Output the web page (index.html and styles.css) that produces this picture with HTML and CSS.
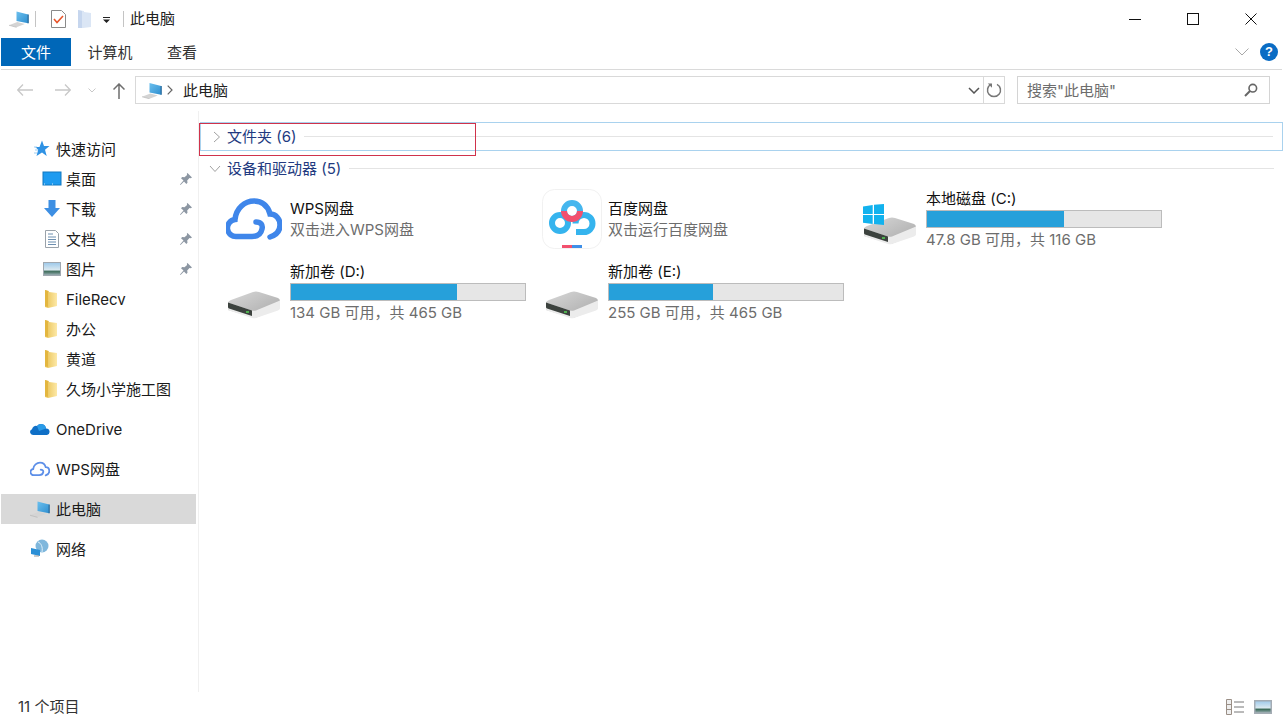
FILE: index.html
```html
<!DOCTYPE html>
<html lang="zh-CN">
<head>
<meta charset="utf-8">
<title>此电脑</title>
<link rel="stylesheet" href="styles.css">
</head>
<body>
<svg class="defs" width="0" height="0" aria-hidden="true">
  <defs>
    <linearGradient id="scr" x1="0" y1="0" x2="1" y2="1"><stop offset="0" stop-color="#6cc0ee"/><stop offset="1" stop-color="#2f8fd0"/></linearGradient>
    <linearGradient id="fold" x1="0" y1="0" x2="1" y2="0"><stop offset="0" stop-color="#e8c050"/><stop offset="1" stop-color="#fde9a8"/></linearGradient>
    <linearGradient id="top" x1="0" y1="0" x2="1" y2="1"><stop offset="0" stop-color="#d8d8d8"/><stop offset="1" stop-color="#a8a8a8"/></linearGradient>
    <linearGradient id="pic" x1="0" y1="0" x2="0" y2="1"><stop offset="0" stop-color="#9cc8ea"/><stop offset=".55" stop-color="#d8e8f0"/><stop offset=".7" stop-color="#3f6d5c"/><stop offset="1" stop-color="#a8b8c0"/></linearGradient>
    <symbol id="pc" viewBox="0 0 24 20">
      <path d="M0 17.500l10-4 9 2.500-10 4z" fill="#d4d4d4"/>
      <path d="M0 17.500l9 2.500" stroke="#b0b0b0" stroke-width=".7"/>
      <path d="M9 1l14 3.500V15L9 12.500z" fill="url(#scr)"/>
      <path d="M23 4.500V15" stroke="#2a6b9c" stroke-width="1.500"/>
    </symbol>
    <symbol id="folder" viewBox="0 0 14 20">
      <path d="M1 1l4 1v1l8 1v13l-9 2-3-1z" fill="url(#fold)"/>
      <path d="M1 1l3 1v16l-3-1z" fill="#e3b63f"/>
    </symbol>
    <symbol id="pin" viewBox="0 0 14 14">
      <path d="M8.500 1l4.500 4.500-1.300.7-1.200-.3-2.300 2.600.3 2.300-1.200 1.200-2.300-2.500L1.500 13 1 12.500l3.500-4-2.500-2.300 1.200-1.200 2.300.3L8.100 3l-.3-1.200z" fill="#8d97a3"/>
    </symbol>
    <symbol id="drive" viewBox="0 0 54 28">
      <path d="M1 12Q1 10 4 9L26 1q3-1 6 0l19 6q2 1 2 3v7L28 27 1 19z" fill="url(#top)"/>
      <path d="M1 11.500l24 8q2 .7 4 0L53 9.500V17q0 1.500-2 2.500L29 27q-2 .7-4 0L2 19.500q-1-.5-1-2z" fill="#ececec"/>
      <path d="M1 11.500l24 8v5.500L2 17.500q-1-.4-1-1.500z" fill="#3c423e"/>
      <rect x="19" y="20" width="3" height="2" fill="#4fb04f"/>
    </symbol>
  </defs>
</svg>
<div class="window">
  <header class="titlebar">
    <div class="qat">
      <svg class="ic-pc-title"><use href="#pc"/></svg>
      <span class="vsep"></span>
      <svg class="ic-check" viewBox="0 0 15 18"><path d="M.5.500h10l4 4v13H.5z" fill="#fff" stroke="#8a8a8a"/><path d="M3 9l3 3.500 6-6.500" fill="none" stroke="#e8552b" stroke-width="1.600"/></svg>
      <svg class="ic-newfolder" viewBox="0 0 13 18"><path d="M0 0l6 1v1l7 1v14l-8 1H0z" fill="#dbe6f5"/><path d="M0 0l4 1v17H0z" fill="#c6d6ee"/></svg>
      <svg class="ic-qatdrop" viewBox="0 0 7 6"><path d="M0 0h7v1H0zM0 2.500h7L3.500 6z" fill="#222"/></svg>
      <span class="vsep"></span>
      <span class="wintitle">此电脑</span>
    </div>
    <div class="winctl">
      <span class="ctl"><svg viewBox="0 0 12 12" width="12" height="12"><path d="M0 6.500h12" stroke="#111"/></svg></span>
      <span class="ctl"><svg viewBox="0 0 12 12" width="12" height="12"><rect x=".5" y=".5" width="11" height="11" fill="none" stroke="#111"/></svg></span>
      <span class="ctl"><svg viewBox="0 0 12 12" width="12" height="12"><path d="M.5.500l11 11M11.500.500l-11 11" stroke="#111" fill="none"/></svg></span>
    </div>
  </header>

  <nav class="ribbon">
    <span class="tab tab-file">文件</span>
    <span class="tab tab-pc">计算机</span>
    <span class="tab tab-view">查看</span>
    <span class="ribbon-space"></span>
    <svg class="ic-collapse" viewBox="0 0 14 8"><path d="M.5.500L7 7 13.500.500" fill="none" stroke="#a8a8a8"/></svg>
    <span class="help">?</span>
  </nav>

  <div class="addressrow">
    <svg class="nav nav-back" viewBox="0 0 16 12"><path d="M16 6H1M6 .5L.7 6 6 11.500" fill="none" stroke="#c8c8c8" stroke-width="1.300"/></svg>
    <svg class="nav nav-fwd" viewBox="0 0 16 12"><path d="M0 6h15M10 .5L15.300 6 10 11.500" fill="none" stroke="#c8c8c8" stroke-width="1.300"/></svg>
    <svg class="nav nav-down" viewBox="0 0 8 5"><path d="M.5.500L4 4 7.500.500" fill="none" stroke="#c8c8c8"/></svg>
    <svg class="nav nav-up" viewBox="0 0 12 16"><path d="M6 16V1M.5 6.500L6 1l5.500 5.500" fill="none" stroke="#6e6e6e" stroke-width="1.500"/></svg>
    <div class="addressbar">
      <svg class="ic-pc-addr"><use href="#pc"/></svg>
      <svg class="crumb-sep" viewBox="0 0 6 10"><path d="M.7.700L5 5 .7 9.300" fill="none" stroke="#666" stroke-width="1.200"/></svg>
      <span class="crumb">此电脑</span>
      <span class="addr-space"></span>
      <svg class="addr-drop" viewBox="0 0 12 7"><path d="M1 1l5 5 5-5" fill="none" stroke="#555" stroke-width="1.500"/></svg>
      <span class="addr-refresh"><svg viewBox="0 0 16 16" width="16" height="16"><path d="M5 2.300A6.500 6.500 0 1 0 11 2.300" fill="none" stroke="#777" stroke-width="1.500"/><path d="M1.800 1.500H6v4.200z" fill="#777"/></svg></span>
    </div>
    <div class="searchbox">
      <span class="search-text">搜索"此电脑"</span>
      <svg class="ic-search" viewBox="0 0 14 14"><circle cx="8.800" cy="5.200" r="3.800" fill="none" stroke="#666" stroke-width="1.600"/><path d="M6 8L1 13" stroke="#666" stroke-width="2"/></svg>
    </div>
  </div>

  <main class="body">
    <aside class="sidebar">
      <div class="navitem lvl1">
        <svg class="ni" viewBox="0 0 20 20"><path d="M12 1.500l2 5.500h5.500l-4.500 3.800 1.700 6.200L12 13.500 6.500 17l1.700-6.200-3-2.800h4.300z" fill="#2f92e4"/><path d="M4 8h3M5 11h3M4 14h3" stroke="#9dcdf2"/></svg>
        <span>快速访问</span>
      </div>
      <div class="navitem lvl2">
        <svg class="ni" viewBox="0 0 20 20"><rect x="1" y="3" width="18" height="13" fill="#1e9bf0" stroke="#1278c0"/><path d="M2 15h16" stroke="#cfe9fb" stroke-dasharray="1 7"/></svg>
        <span class="grow">桌面</span><svg class="pin"><use href="#pin"/></svg>
      </div>
      <div class="navitem lvl2">
        <svg class="ni" viewBox="0 0 20 20"><path d="M6.500 1h7v8H18l-8 9-8-9h4.500z" fill="#3d8fe3"/></svg>
        <span class="grow">下载</span><svg class="pin"><use href="#pin"/></svg>
      </div>
      <div class="navitem lvl2">
        <svg class="ni" viewBox="0 0 20 20"><path d="M3.500 1.500h10l3 3v14h-13z" fill="#fff" stroke="#9aa2aa"/><path d="M6 5h5M6 8h8M6 10.500h8M6 13h8M6 15.500h8" stroke="#6d8fb0"/></svg>
        <span class="grow">文档</span><svg class="pin"><use href="#pin"/></svg>
      </div>
      <div class="navitem lvl2">
        <svg class="ni" viewBox="0 0 20 20"><rect x="1.500" y="3.500" width="17" height="13" fill="url(#pic)" stroke="#a0a8b0"/></svg>
        <span class="grow">图片</span><svg class="pin"><use href="#pin"/></svg>
      </div>
      <div class="navitem lvl2"><svg class="ni ni-f"><use href="#folder"/></svg><span>FileRecv</span></div>
      <div class="navitem lvl2"><svg class="ni ni-f"><use href="#folder"/></svg><span>办公</span></div>
      <div class="navitem lvl2"><svg class="ni ni-f"><use href="#folder"/></svg><span>黄道</span></div>
      <div class="navitem lvl2"><svg class="ni ni-f"><use href="#folder"/></svg><span>久场小学施工图</span></div>
      <div class="navitem lvl1 gap">
        <svg class="ni" viewBox="0 0 20 14"><path d="M3 13a3 3 0 0 1-1-5.800A4 4 0 0 1 7 4a5 5 0 0 1 9 2.500A3.300 3.300 0 0 1 17 13z" fill="#0f6fc6"/><path d="M7 4a5 5 0 0 1 9 2.500L9 9z" fill="#2a9be8"/></svg>
        <span>OneDrive</span>
      </div>
      <div class="navitem lvl1 gap">
        <svg class="ni" viewBox="0 0 56 42"><path d="M26 38H11a8.500 8.500 0 0 1-2-17C10 10 19 3 28 3c8 0 14 5 16 13 6 0 10 5 10 11s-4 10-10 12M30 23c5 0 8 3 7 7-1 5-6 8-11 8" fill="none" stroke="#5d8fe8" stroke-width="5" stroke-linecap="round"/></svg>
        <span>WPS网盘</span>
      </div>
      <div class="navitem lvl1 gap selected">
        <svg class="ni"><use href="#pc"/></svg>
        <span>此电脑</span>
      </div>
      <div class="navitem lvl1 gap">
        <svg class="ni" viewBox="0 0 20 20"><circle cx="12" cy="7" r="6.500" fill="#7fb7dc"/><path d="M8 3c3 1 5 5 4 10" fill="none" stroke="#dff0fa"/><path d="M1 9l9 2v6l-9-2z" fill="#2b8fd6"/><path d="M4 17h5" stroke="#999"/></svg>
        <span>网络</span>
      </div>
    </aside>

    <section class="content">
      <div class="group-head focused">
        <svg class="chev" viewBox="0 0 8 12"><path d="M1 1l5.500 5L1 11" fill="none" stroke="#a0a0a0"/></svg>
        <span class="group-title">文件夹 (6)</span>
        <span class="group-line"></span>
      </div>
      <div class="group-head second">
        <svg class="chev chev-open" viewBox="0 0 12 8"><path d="M1 1l5 5.500L11 1" fill="none" stroke="#a0a0a0"/></svg>
        <span class="group-title">设备和驱动器 (5)</span>
        <span class="group-line"></span>
      </div>

      <div class="tiles">
        <div class="tile">
          <span class="tile-icon"><svg class="ic-wps" viewBox="0 0 56 42"><path d="M26 38.500H11a8.500 8.500 0 0 1-2-17C10 10 19 3 28 3c8 0 14 5 16 13 6 0 10 5 10 11s-4 10-10 12M30 24c5 0 7 3 6 7-1 5-5 7.500-10 7.500" fill="none" stroke="#3f86ea" stroke-width="5.500" stroke-linecap="round"/></svg></span>
          <div class="tile-text tall"><div class="name">WPS网盘</div><div class="sub">双击进入WPS网盘</div></div>
        </div>
        <div class="tile">
          <span class="tile-icon"><svg class="ic-baidu" viewBox="0 0 60 60">
            <rect x=".5" y=".5" width="59" height="59" rx="12" fill="#fff" stroke="#f1f1f1"/>
            <circle cx="18" cy="34" r="8" fill="none" stroke="#35b4ee" stroke-width="6"/>
            <path d="M34 43H42a8.500 8.500 0 1 0-8.500-8.500" fill="none" stroke="#35b4ee" stroke-width="6"/>
            <circle cx="30" cy="22" r="8" fill="none" stroke="#45b6ee" stroke-width="6"/>
            <path d="M22 22a8 8 0 0 0 16 0" fill="none" stroke="#f2506e" stroke-width="6"/>
            <rect x="20" y="56" width="10" height="3" fill="#f2506e"/><rect x="30" y="56" width="10" height="3" fill="#3e8fe8"/>
          </svg></span>
          <div class="tile-text tall"><div class="name">百度网盘</div><div class="sub">双击运行百度网盘</div></div>
        </div>
        <div class="tile">
          <span class="tile-icon"><span class="ic-c">
            <svg class="ic-drive"><use href="#drive"/></svg>
            <svg class="ic-win" viewBox="0 0 21 21"><path d="M0 2.500L9.700 1v9H0zM11 .8L21 0v10H11zM0 11h9.700v9L0 18.700zM11 11h10v10l-10-1z" fill="#12b2ee"/></svg>
          </span></span>
          <div class="tile-text"><div class="name">本地磁盘 (C:)</div><div class="bar"><span class="fill" style="width:58.700%"></span></div><div class="sub">47.8 GB 可用，共 116 GB</div></div>
        </div>
        <div class="tile">
          <span class="tile-icon"><svg class="ic-drive"><use href="#drive"/></svg></span>
          <div class="tile-text"><div class="name">新加卷 (D:)</div><div class="bar"><span class="fill" style="width:71%"></span></div><div class="sub">134 GB 可用，共 465 GB</div></div>
        </div>
        <div class="tile">
          <span class="tile-icon"><svg class="ic-drive"><use href="#drive"/></svg></span>
          <div class="tile-text"><div class="name">新加卷 (E:)</div><div class="bar"><span class="fill" style="width:44.500%"></span></div><div class="sub">255 GB 可用，共 465 GB</div></div>
        </div>
      </div>
      <div class="redbox"></div>
    </section>
  </main>

  <footer class="status">
    <span class="count">11 个项目</span>
    <span class="status-icons">
      <svg class="vw-list" viewBox="0 0 18 16"><path d="M.5.500h5v15h-5zM.5 5.500h5M.5 10.500h5" fill="#eee" stroke="#9a8f86"/><path d="M8 3h10M8 8h10M8 13h10" stroke="#777" stroke-width="1"/></svg>
      <svg class="vw-tile" viewBox="0 0 18 14"><rect x=".75" y=".75" width="16.500" height="12.500" fill="url(#pic)" stroke="#a4acb4" stroke-width="1.500"/></svg>
    </span>
  </footer>
</div>
</body>
</html>
```

FILE: styles.css
```css
* { box-sizing: border-box; }
html, body { margin: 0; height: 100%; overflow: hidden; background: #fff; }
body {
  font-family: "Inter", "Noto Sans CJK SC", sans-serif;
  font-size: 15px;
  line-height: 20px;
  color: #1a1a1a;
}
.defs { position: absolute; }
svg { display: block; flex: none; }

.window { display: flex; flex-direction: column; height: 722px; width: 1283px; }

/* Title bar */
.titlebar { display: flex; height: 38px; justify-content: space-between; flex: none; }
.qat { display: flex; align-items: center; padding: 0 0 0 9px; }
.ic-pc-title { width: 20px; height: 18px; }
.vsep { width: 1px; height: 16px; background: #c4c4c4; margin: 0 0 0 6px; }
.ic-check { width: 15px; height: 18px; margin-left: 15px; }
.ic-newfolder { width: 13px; height: 18px; margin-left: 12px; }
.ic-qatdrop { width: 7px; height: 6px; margin: 2px 0 0 12px; }
.ic-qatdrop + .vsep { margin-left: 13px; }
.wintitle { margin-left: 6px; color: #222; }
.winctl { display: flex; padding-right: 3px; }
.ctl { width: 58px; height: 38px; display: flex; align-items: center; justify-content: center; }

/* Ribbon */
.ribbon {
  display: flex; align-items: stretch; height: 32px; flex: none;
  margin-left: 1px; border-bottom: 1px solid #dadada; margin-right: 1px;
  padding-bottom: 3px;
}
.tab { display: flex; align-items: center; justify-content: center; color: #333; padding-top: 2px; }
.tab-file { width: 70px; background: #0067b8; color: #fff; }
.tab-pc { width: 78px; }
.tab-view { width: 66px; }
.ribbon-space { flex: 1; }
.ic-collapse { width: 14px; height: 8px; align-self: center; margin-right: 11px; }
.help {
  width: 18px; height: 18px; border-radius: 50%; background: #0a6cc4; color: #fff;
  font: bold 13px/18px "Liberation Sans", sans-serif; text-align: center; align-self: center;
  margin-right: 4px;
}

/* Address row */
.addressrow { display: flex; align-items: center; height: 35px; margin-top: 6px; flex: none; padding-bottom: 7px; }
.nav-back { width: 16px; height: 12px; margin-left: 17px; }
.nav-fwd { width: 16px; height: 12px; margin-left: 22px; }
.nav-down { width: 8px; height: 5px; margin-left: 17px; }
.nav-up { width: 12px; height: 16px; margin: 2px 0 0 17px; }
.addressbar {
  display: flex; align-items: center; width: 870px; height: 28px; margin-left: 10px;
  border: 1px solid #d9d9d9;
}
.ic-pc-addr { width: 20px; height: 17px; margin-left: 6px; }
.crumb-sep { width: 6px; height: 10px; margin-left: 5px; }
.crumb { margin-left: 10px; color: #222; padding-top: 2px; }
.addr-space { flex: 1; }
.addr-drop { width: 12px; height: 7px; margin-right: 2px; }
.addr-refresh {
  width: 21px; height: 26px; margin-left: 1px; border-left: 1px solid #d9d9d9;
  display: flex; align-items: center; justify-content: center;
}
.searchbox {
  display: flex; align-items: center; justify-content: space-between;
  width: 253px; height: 28px; margin-left: 12px; padding: 0 11px 0 9px;
  border: 1px solid #d4d4d4;
}
.search-text { color: #6d6d6d; padding-top: 2px; }
.ic-search { width: 14px; height: 14px; }

/* Body */
.body { display: flex; flex: 1; min-height: 0; }
.sidebar {
  width: 199px; flex: none; padding: 23px 0 0 1px;
  border-right: 1px solid #f0f0f0;
}
.navitem { display: flex; align-items: center; height: 30px; margin-right: 2px; }
.navitem span { padding-top: 2px; }
.navitem.lvl1 { padding-left: 29px; }
.navitem.lvl2 { padding-left: 41px; padding-right: 2px; }
.navitem.gap { margin-top: 10px; }
.navitem.selected { background: #d9d9d9; }
.ni { width: 20px; height: 20px; margin-right: 6px; }
.lvl2 .ni { margin-right: 4px; }
.lvl2 .ni-f { width: 14px; height: 20px; margin-left: 2px; margin-right: 8px; }
.grow { flex: 1; }
.pin { width: 14px; height: 14px; margin-right: 1px; }

.content { flex: 1; position: relative; padding-top: 11px; min-width: 0; }
.group-head { display: flex; align-items: center; height: 29px; padding: 0 9px 0 12px; margin-left: 1px; }
.group-head.focused { border: 1px solid #a9d2ee; }
.group-head.second { margin-top: 3px; padding-left: 9px; }
.chev { width: 8px; height: 12px; margin-right: 3px; }
.second .chev-open { width: 12px; height: 8px; margin: 0 2px 0 0; }
.group-title { white-space: nowrap; color: #223a80; margin-left: 3px; }
.second .group-title { margin-left: 4px; }
.group-line { flex: 1; height: 1px; background: #e4e4e4; margin-left: 8px; }
.redbox { position: absolute; left: 0; top: 12px; width: 277px; height: 33px; border: 1px solid #d0324b; }

/* Tiles */
.tiles { display: grid; grid-template-columns: repeat(3, 318px); grid-auto-rows: 73px; padding: 0 0 0 25px; }
.tile { display: flex; align-items: center; padding-bottom: 2px; }
.tile-icon { width: 66px; height: 60px; flex: none; display: flex; align-items: center; }
.tile-text { width: 238px; }
.name { color: #111; line-height: 22px; white-space: nowrap; padding-top: 1px; }
.sub { color: #6d6d6d; line-height: 22px; white-space: nowrap; padding-top: 1px; }
.tall .sub { line-height: 20px; padding-top: 0; }
.bar { height: 18px; border: 1px solid #bcbcbc; background: #e6e6e6; width: 236px; margin: 0; }
.fill { display: block; height: 100%; background: #26a0da; }
.ic-wps { width: 56px; height: 42px; margin-left: 2px; }
.ic-baidu { width: 60px; height: 60px; }
.ic-drive { width: 54px; height: 28px; margin: 26px 0 0 3px; }
.ic-c { display: block; position: relative; width: 60px; height: 60px; }
.ic-c .ic-drive { margin: 28px 0 0 3px; }
.ic-win { position: absolute; left: 3px; top: 15px; width: 21px; height: 21px; }

/* Status bar */
.status {
  display: flex; align-items: center; justify-content: space-between;
  height: 30px; flex: none; padding: 0 11px 0 18px;
}
.count { color: #333; }
.status-icons { display: flex; align-items: center; gap: 10px; }
.vw-list { width: 18px; height: 16px; }
.vw-tile { width: 18px; height: 14px; }
```
